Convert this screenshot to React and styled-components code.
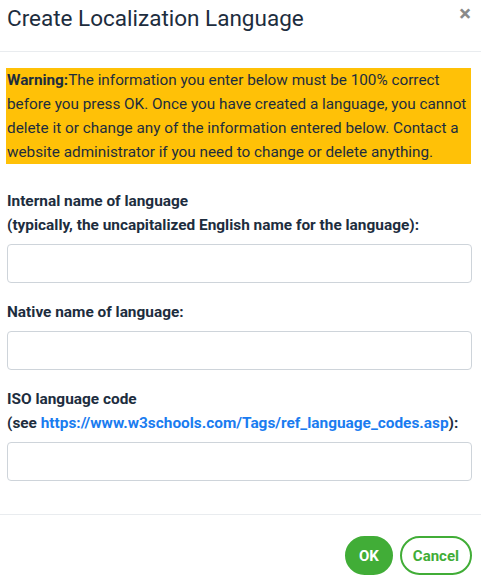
import styled, { createGlobalStyle } from 'styled-components';

const GlobalStyle = createGlobalStyle`
  body {
    margin: 0;
    background: #fff;
    font-family: Roboto, "Noto Sans", sans-serif;
    color: #1d2d3e;
  }
`;

const App = () => {
  return (
    <>
      <GlobalStyle />
      <StyledModal>
        <StyledHeader>
          <h2>Create Localization Language</h2>
          <StyledClose aria-label='close'>×</StyledClose>
        </StyledHeader>
        <StyledBody>
          <StyledWarning>
            <strong>Warning:</strong>The information you enter below must be 100% correct
            before you press OK. Once you have created a language, you cannot delete it or
            change any of the information entered below. Contact a website administrator if
            you need to change or delete anything.
          </StyledWarning>
          <StyledGroup>
            <StyledLabel>
              Internal name of language
              <br />
              (typically, the uncapitalized English name for the language):
            </StyledLabel>
            <StyledInput type='text' />
          </StyledGroup>
          <StyledGroup>
            <StyledLabel>Native name of language:</StyledLabel>
            <StyledInput type='text' />
          </StyledGroup>
          <StyledGroup>
            <StyledLabel>
              ISO language code
              <br />
              (see{' '}
              <a href='#'>https://www.w3schools.com/Tags/ref_language_codes.asp</a>):
            </StyledLabel>
            <StyledInput type='text' />
          </StyledGroup>
        </StyledBody>
        <StyledFooter>
          <StyledButton $primary>OK</StyledButton>
          <StyledButton>Cancel</StyledButton>
        </StyledFooter>
      </StyledModal>
    </>
  );
};

const StyledModal = styled.div`
  width: 481px;
  background: white;
`;

const StyledHeader = styled.div`
  height: 51px;
  padding: 0 7px;
  border-bottom: 1px solid #e9ecef;
  display: flex;
  justify-content: space-between;
  align-items: flex-start;
  h2 {
    margin: 3px 0 0;
    font-size: 22.5px;
    font-weight: 400;
    line-height: 30px;
    color: #1d2d3e;
  }
`;

const StyledClose = styled.span`
  margin: 2px 3px 0 0;
  font-size: 22px;
  font-weight: 700;
  line-height: 24px;
  color: #8a8a8a;
`;

const StyledBody = styled.div`
  padding: 16px 10px 33px 6px;
`;

const StyledWarning = styled.div`
  background: #ffc107;
  padding: 0 1px;
  font-size: 15.3px;
  line-height: 24px;
  color: #1d2d3e;
  strong {
    font-weight: 700;
  }
`;

const StyledGroup = styled.div`
  margin-top: 25px;
  & + & {
    margin-top: 17px;
  }
`;

const StyledLabel = styled.label`
  display: block;
  padding-left: 1px;
  font-size: 15.4px;
  font-weight: 700;
  line-height: 24px;
  color: #1d2d3e;
  margin-bottom: 7px;
  a {
    color: #1a7cf0;
    text-decoration: none;
  }
`;

const StyledInput = styled.input`
  display: block;
  box-sizing: border-box;
  width: 100%;
  height: 39px;
  margin-left: 1px;
  border: 1px solid #ced4da;
  border-radius: 4px;
  background: white;
`;

const StyledFooter = styled.div`
  border-top: 1px solid #e9ecef;
  padding: 21px 9px 10px;
  display: flex;
  justify-content: flex-end;
  gap: 7px;
`;

const StyledButton = styled.button`
  box-sizing: border-box;
  height: 39px;
  padding: 0 ${(p) => (p.$primary ? '12px' : '11px')};
  border-radius: 20px;
  border: 2px solid #41ad37;
  background: ${(p) => (p.$primary ? '#41ad37' : 'white')};
  color: ${(p) => (p.$primary ? 'white' : '#41ad37')};
  font-family: Roboto, "Noto Sans", sans-serif;
  font-size: 15px;
  font-weight: 700;
`;

export default App;
